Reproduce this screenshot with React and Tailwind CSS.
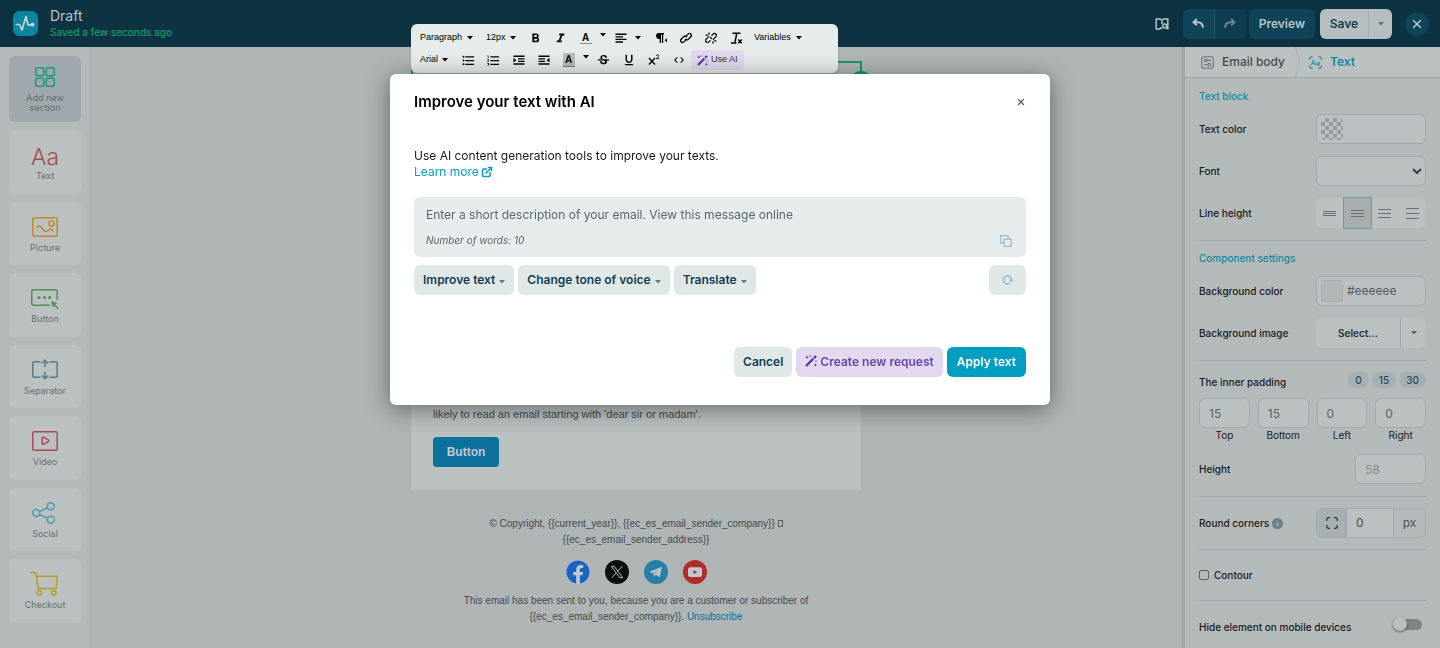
import React, { useState } from 'react';
import { ExternalLink, X, Info } from 'lucide-react';
import {
    MdFormatBold,
    MdFormatItalic,
    MdFormatListBulleted,
    MdFormatListNumbered,
    MdStrikethroughS,
    MdFormatUnderlined,
    MdCode,
} from 'react-icons/md';
import { FaFacebook } from 'react-icons/fa';

const Caret = ({ className = '' }) => (
    <svg viewBox="0 0 6 4" className={`w-1.5 h-1 flex-shrink-0 ${className}`} fill="currentColor" aria-hidden="true">
        <path d="M0 0h6L3 3.6z" />
    </svg>
);

const WandIcon = ({ className = 'w-3 h-3' }) => (
    <svg viewBox="0 0 12 12" className={className} fill="currentColor" aria-hidden="true">
        <path d="M0.2 10.2 7.4 3 9 4.6 1.8 11.8z" />
        <path d="M8.1 2.3 10.2 0.2 11.8 1.8 9.7 3.9z" />
        <path d="M2 0.4 2.5 1.7 3.8 2.2 2.5 2.7 2 4 1.5 2.7 0.2 2.2 1.5 1.7z" />
        <path d="M10.3 8.2 10.8 9.5 12 10 10.8 10.5 10.3 11.8 9.8 10.5 8.6 10 9.8 9.500z" />
        <circle cx="5.3" cy="1" r="0.7" />
        <circle cx="11" cy="6.300" r="0.7" />
    </svg>
);

const AddIcon = () => (
    <svg viewBox="0 0 30 30" className="w-[30px] h-[30px]" fill="none" stroke="currentColor" strokeWidth="1.5" aria-hidden="true">
        <rect x="5.75" y="5.75" width="8" height="8" rx="1.5" />
        <rect x="16.25" y="5.75" width="8" height="8" rx="1.5" />
        <rect x="5.75" y="16.25" width="8" height="8" rx="1.5" />
        <rect x="16.25" y="16.25" width="8" height="8" rx="1.5" />
    </svg>
);

const PictureIcon = () => (
    <svg viewBox="0 0 30 30" className="w-[30px] h-[30px]" fill="none" stroke="currentColor" strokeWidth="1.5" aria-hidden="true">
        <rect x="2.75" y="5.75" width="24.5" height="18.5" rx="1.5" />
        <circle cx="21.5" cy="11.5" r="2.6" />
        <path d="M6.500 16c1.200-1.800 3.200-3.200 4.700-.9s2.600 4.400 5 4.400 2.400-2.500 4.200-2.500 2.200 1 3 2.500" />
    </svg>
);

const ButtonIcon = () => (
    <svg viewBox="0 0 30 30" className="w-[30px] h-[30px]" fill="none" stroke="currentColor" strokeWidth="1.500" aria-hidden="true">
        <path d="M20 22.250H3.250a1.500 1.500 0 0 1-1.500-1.500V8.250a1.500 1.500 0 0 1 1.500-1.500h22.500a1.500 1.500 0 0 1 1.500 1.500v8.500" />
        <g fill="currentColor" stroke="none">
            <circle cx="9" cy="14.500" r="1.600" />
            <circle cx="14.500" cy="14.500" r="1.600" />
            <circle cx="19.700" cy="14.500" r="1.600" />
            <path d="M21 18l6.500 2.200-2.300 1.400 3.300 3.300-1 1-3.300-3.300-1.300 2.200z" />
        </g>
    </svg>
);

const SeparatorIcon = () => (
    <svg viewBox="0 0 30 30" className="w-[30px] h-[30px]" fill="none" stroke="currentColor" strokeWidth="1.500" aria-hidden="true">
        <path d="M10.500 6.750H4.250a1.500 1.500 0 0 0-1.500 1.500v12.500a1.500 1.500 0 0 0 1.500 1.500h6.250M19.500 6.750h6.250a1.500 1.500 0 0 1 1.500 1.500v12.500a1.500 1.500 0 0 1-1.500 1.500H19.500" />
        <path d="M15 12V5.500M11.800 8.500 15 5.300l3.200 3.200M15 17v6.500M11.800 20.500l3.200 3.200 3.200-3.200" />
    </svg>
);

const VideoIcon = () => (
    <svg viewBox="0 0 30 30" className="w-[30px] h-[30px]" fill="none" stroke="currentColor" strokeWidth="1.500" strokeLinejoin="round" aria-hidden="true">
        <rect x="2.750" y="5.750" width="24.500" height="18.500" rx="1.500" />
        <path d="M12.250 12.200c0-1 .8-1.200 1.600-.8l4.400 2.500c.8.500.8 1.300 0 1.800l-4.400 2.500c-.8.400-1.600.1-1.600-.8z" />
    </svg>
);

const SocialIcon = () => (
    <svg viewBox="0 0 30 30" className="w-[30px] h-[30px]" fill="none" stroke="currentColor" strokeWidth="1.500" aria-hidden="true">
        <circle cx="6.300" cy="15" r="3.500" />
        <circle cx="20.800" cy="8.300" r="3.500" />
        <circle cx="20.800" cy="21.700" r="3.500" />
        <path d="M9.500 13.500l8.100-3.700M9.500 16.500l8.100 3.700" />
    </svg>
);

const CartIcon = () => (
    <svg viewBox="0 0 30 30" className="w-[30px] h-[30px]" fill="none" stroke="currentColor" strokeWidth="1.500" strokeLinejoin="round" aria-hidden="true">
        <path d="M0.500 3.500h4.800l1.200 3.700h20.700l-1 12.300H8L6.500 7.200" />
        <circle cx="9.500" cy="24" r="2.200" />
        <circle cx="23.800" cy="24" r="2.200" />
    </svg>
);

const UndoIcon = ({ className = '' }) => (
    <svg viewBox="0 0 12 12" className={`w-3 h-3 ${className}`} fill="none" stroke="currentColor" strokeWidth="1.900" aria-hidden="true">
        <path d="M4.800 1 1.500 4.200l3.300 3.200M1.500 4.200h4.300c3.200 0 4.900 2 5.100 5.600" />
    </svg>
);

const blocks = [
    { name: 'Text', color: 'text-[#a34f4d]', icon: null },
    { name: 'Picture', color: 'text-[#c08a2a]', icon: PictureIcon },
    { name: 'Button', color: 'text-[#4c9150]', icon: ButtonIcon },
    { name: 'Separator', color: 'text-[#537a8e]', icon: SeparatorIcon },
    { name: 'Video', color: 'text-[#a94a5c]', icon: VideoIcon },
    { name: 'Social', color: 'text-[#4d9bb3]', icon: SocialIcon },
    { name: 'Checkout', color: 'text-[#b99b22]', icon: CartIcon },
];

function Header() {
    return (
        <header className="h-[47px] flex-shrink-0 flex items-center bg-[#0d3342] pl-[13px] pr-[11px]">
            <svg viewBox="0 0 25 25" className="w-[25px] h-[25px]" aria-hidden="true">
                <rect width="25" height="25" rx="7" fill="#0e859f" />
                <path d="M3.500 13.500h3l2.500 5.500L13 5.500l2 8.300h4.500" fill="none" stroke="#c6d3d6" strokeWidth="1.700" strokeLinejoin="round" strokeLinecap="round" />
                <circle cx="19.500" cy="13.700" r="1.900" fill="#c6d3d6" />
            </svg>
            <div className="ml-3">
                <h1 className="text-sm leading-4 text-[#b9c3c6]">Draft</h1>
                <p className="text-[10px] leading-4 font-medium text-[#0f9a6c]">Saved a few seconds ago</p>
            </div>
            <div className="ml-auto flex items-center text-[12px] font-semibold">
                <button aria-label="Guide" className="w-7 h-[30px] mr-[7px] flex items-center justify-center text-[#b9c3c6]">
                    <svg viewBox="0 0 14 14" className="w-3.5 h-3.5" fill="none" stroke="currentColor" strokeWidth="1.500" aria-hidden="true">
                        <path d="M6.300 11 4.500 12H1.200V2H5l2 1 2-1h3.800v4.500M7 3v4M5 11.800 7.200 11" />
                        <circle cx="9.700" cy="9" r="1.900" />
                        <path d="M12.800 6v6.500M11 10.300l1.900 1.900" />
                    </svg>
                </button>
                <div className="flex">
                    <button aria-label="Undo" className="w-[31px] h-[30px] rounded-l-md bg-[#0f4459] flex items-center justify-center text-[#b9c3c6]">
                        <UndoIcon />
                    </button>
                    <button aria-label="Redo" className="w-8 h-[30px] rounded-r-md border-l border-[#32596a] bg-[#0e3d4f] flex items-center justify-center text-[#6e8690]">
                        <UndoIcon className="-scale-x-100" />
                    </button>
                </div>
                <button className="ml-[3px] h-[30px] px-2.5 rounded-md bg-[#0f4459] text-[#b9c3c6]">Preview</button>
                <div className="ml-[5px] flex text-[#14404f]">
                    <button className="h-[30px] w-12 rounded-l-md bg-[#b7bec1]">Save</button>
                    <button aria-label="More save options" className="h-[30px] w-6 rounded-r-md border-l border-[#a7aeb1] bg-[#b7bec1] flex items-center justify-center text-[#5f7177]">
                        <Caret />
                    </button>
                </div>
                <button aria-label="Close" className="ml-[13px] w-6 h-6 rounded-full bg-[#0f4459] flex items-center justify-center text-[#b9c3c6]">
                    <X className="w-3.5 h-3.5" strokeWidth={2.5} />
                </button>
            </div>
        </header>
    );
}

function BlockPalette() {
    return (
        <aside className="w-[91px] flex-shrink-0 px-[9px] pt-[9px] bg-[#b4b9ba] border-r border-[#a6abac] text-[9px] leading-[10px] text-[#676d6e]">
            <div className="h-[567px] flex flex-col gap-2">
                <button className="h-[66px] flex-shrink-0 w-[72px] rounded-md bg-[#9fa8ad] flex flex-col items-center pt-[6px]">
                    <span className="text-[#14997f]"><AddIcon /></span>
                    <span className="mt-px">Add new<br />section</span>
                </button>
                {blocks.map(({ name, color, icon: IconComponent }) => (
                    <button key={name} className="flex-1 w-[72px] rounded-md bg-[#bbc0c1] flex flex-col items-center pt-[10px]">
                        <span className={`h-[30px] flex items-center ${color}`}>
                            {IconComponent ? <IconComponent /> : <span className="pt-1 text-[23px] font-light" aria-hidden="true">Aa</span>}
                        </span>
                        <span className="mt-px">{name}</span>
                    </button>
                ))}
            </div>
        </aside>
    );
}

const Tool = ({ label, className = '', children }) => (
    <button aria-label={label} className={`w-[25px] h-5 flex-shrink-0 flex items-center justify-center ${className}`}>
        {children}
    </button>
);

const ToolCaret = ({ label }) => (
    <button aria-label={label} className="w-2.5 h-5 flex-shrink-0 flex justify-center pt-[5px]">
        <Caret />
    </button>
);

function EditorToolbar() {
    return (
        <div className="absolute left-0 -top-[23px] z-20 w-[427px] h-[49px] pl-[9px] pt-1 rounded-md bg-[#e6ecec] text-[9px] text-black shadow-sm">
            <div className="flex items-center h-5">
                <button className="w-[66px] flex items-center gap-[5px]">Paragraph <Caret /></button>
                <button className="w-[37px] flex items-center gap-1">12px <Caret /></button>
                <Tool label="Bold"><MdFormatBold className="w-[15px] h-[15px]" /></Tool>
                <Tool label="Italic"><MdFormatItalic className="w-[15px] h-[15px]" /></Tool>
                <Tool label="Text color">
                    <span className="w-3 h-3 border-b border-[#888] text-[10px] leading-[11px] font-bold">A</span>
                </Tool>
                <ToolCaret label="Text color options" />
                <Tool label="Align">
                    <svg viewBox="0 0 12 12" className="w-3 h-3" fill="currentColor" aria-hidden="true">
                        <path d="M.5 1.500h11V3H.5zM.5 4.200h7.500v1.400H.5zM.5 6.700h11v1.400H.5zM.5 9.300h7.500v1.500H.5z" />
                    </svg>
                </Tool>
                <button aria-label="Align options" className="w-[15px] h-5 pl-0.5 flex items-center"><Caret /></button>
                <Tool label="Text direction">
                    <svg viewBox="0 0 12 12" className="w-3 h-3" fill="currentColor" aria-hidden="true">
                        <path d="M3.500 1H9v1.400H8.200V11H6.900V2.400H6V11H4.700V7A3 3 0 0 1 3.500 1z" />
                        <path d="M12 6.200v4.200L9.600 8.300z" />
                    </svg>
                </Tool>
                <Tool label="Insert link">
                    <svg viewBox="0 0 12 12" className="w-3 h-3" fill="none" stroke="currentColor" strokeWidth="1.300" strokeLinecap="round" aria-hidden="true">
                        <path d="M5.200 8.600 4 9.900a1.900 1.900 0 0 1-2.800-2.700l2.500-2.600a1.900 1.900 0 0 1 2.900.2M6.800 3.400 8 2.100a1.900 1.900 0 0 1 2.800 2.700L8.300 7.400a1.900 1.900 0 0 1-2.900-.2" />
                    </svg>
                </Tool>
                <Tool label="Remove link">
                    <svg viewBox="0 0 12 12" className="w-3 h-3" fill="none" stroke="currentColor" strokeWidth="1.200" strokeLinecap="round" aria-hidden="true">
                        <path d="M5.200 8.600 4 9.900a1.900 1.900 0 0 1-2.800-2.700l2.500-2.600M6.800 3.400 8 2.100a1.900 1.900 0 0 1 2.800 2.700L8.300 7.400M5.300 5.300l1.400 1.400M4 .8v1.500M1 3.200h1.400M8 11.200V9.700M11 8.800H9.600" />
                    </svg>
                </Tool>
                <Tool label="Clear formatting">
                    <svg viewBox="0 0 14 14" className="w-3.5 h-3.5" fill="none" stroke="currentColor" strokeWidth="1.500" aria-hidden="true">
                        <path d="M3.500 2.200h8M7.800 2.200 6 11M2 12h5.500M9.300 8.600l3.400 3.700M12.700 8.600l-3.400 3.700" />
                    </svg>
                </Tool>
                <button className="pl-1.5 flex items-center gap-[5px]">Variables <Caret /></button>
            </div>
            <div className="flex items-center h-6">
                <button className="w-9 flex items-center gap-1">Arial <Caret /></button>
                <Tool label="Bulleted list"><MdFormatListBulleted className="w-[15px] h-[15px]" /></Tool>
                <Tool label="Numbered list"><MdFormatListNumbered className="w-[15px] h-[15px]" /></Tool>
                <Tool label="Increase indent">
                    <svg viewBox="0 0 12 12" className="w-3 h-3" fill="currentColor" aria-hidden="true">
                        <path d="M.5 1.500h11V3H.5zM5 4.200h6.500v1.400H5zM5 6.700h6.500v1.400H5zM.5 9.300h11v1.500H.5zM.5 3.800 3.400 6.200.5 8.500z" />
                    </svg>
                </Tool>
                <Tool label="Decrease indent">
                    <svg viewBox="0 0 12 12" className="w-3 h-3" fill="currentColor" aria-hidden="true">
                        <path d="M.5 1.500h11V3H.5zM.5 4.200h6.500v1.400H.5zM.5 6.700h6.500v1.400H.5zM.5 9.300h11v1.500H.5zM11.500 3.800 8.600 6.200l2.900 2.300z" />
                    </svg>
                </Tool>
                <Tool label="Highlight color">
                    <span className="w-3 h-3.5 border-b border-[#777] bg-[#b9bcbc] text-[10px] leading-[13px] font-bold">A</span>
                </Tool>
                <ToolCaret label="Highlight color options" />
                <Tool label="Strikethrough"><MdStrikethroughS className="w-[15px] h-[15px]" /></Tool>
                <Tool label="Underline"><MdFormatUnderlined className="w-3.5 h-3.5" /></Tool>
                <Tool label="Superscript">
                    <svg viewBox="0 0 12 12" className="w-3 h-3" fill="none" stroke="currentColor" strokeWidth="1.300" aria-hidden="true">
                        <path d="M1 4l6 6.500M7 4l-6 6.500" />
                        <path d="M8.300 1.800c.3-1.500 2.600-1.300 2.400.1C10.600 2.800 8.800 3.600 8.500 4.700h2.700" strokeWidth="0.900" />
                    </svg>
                </Tool>
                <Tool label="Code view"><MdCode className="w-3 h-3" /></Tool>
                <button className="h-5 px-[6px] rounded-sm bg-[#e2d9ee] text-[#2d3138] flex items-center gap-[3px]">
                    <WandIcon className="w-[11px] h-[11px] text-[#58339a]" />
                    Use AI
                </button>
            </div>
        </div>
    );
}

function EmailPreview() {
    return (
        <main className="flex-1 flex justify-center pr-px bg-[#afb4b5] font-['Liberation_Sans',Arial,sans-serif] text-[#45494b]">
            <div className="relative w-[450px]">
                <EditorToolbar />
                <div className="mt-3.5 -mr-px h-16 border-2 border-[#0d9a6c]" />
                <span className="absolute -right-3 top-6 w-6 h-6 rounded-full bg-[#0d9a6c]" aria-hidden="true" />
                <div className="bg-[#bbc0c1] px-[22px] pt-[281px] pb-[23px]">
                    <p className="leading-4 text-[11px]">likely to read an email starting with &apos;dear sir or madam&apos;.</p>
                    <a href="#button" className="mt-[15px] w-[66px] h-[30px] rounded-sm bg-[#0b709b] text-[#c2c9cc] text-[12px] font-bold flex items-center justify-center">
                        Button
                    </a>
                </div>
                <footer className="pt-[26px] text-center text-[10px] leading-4">
                    <p>© Copyright, {'{{current_year}}'}, {'{{ec_es_email_sender_company}}'} <span className="inline-block w-[5px] h-[7px] border border-[#5b5f61]" /></p>
                    <p>{'{{ec_es_email_sender_address}}'}</p>
                    <div className="mt-3 flex justify-center gap-[15px]">
                        <a href="#facebook" aria-label="Facebook" className="w-6 h-6 rounded-full bg-[#c3c8ca]">
                            <FaFacebook className="w-6 h-6 text-[#1c62c4]" />
                        </a>
                        <a href="#x" aria-label="X">
                            <svg viewBox="0 0 24 24" className="w-6 h-6" aria-hidden="true">
                                <circle cx="12" cy="12" r="12" fill="#0b0e0f" />
                                <path d="M6.300 6.300h2.900L17.700 17.700h-2.900zM17 6.300l-4.400 5.100M11.200 12.900 6.800 17.700" fill="none" stroke="#b6bbbc" strokeWidth="1" />
                            </svg>
                        </a>
                        <a href="#telegram" aria-label="Telegram">
                            <svg viewBox="0 0 24 24" className="w-6 h-6" aria-hidden="true">
                                <circle cx="12" cy="12" r="12" fill="#2580a8" />
                                <path d="M5 12 17.800 6.800 15.800 17.500 11.900 14.700 10 16.600 9.300 13.200z" fill="#bcc4c7" />
                                <path d="M9.300 13.200 15.500 8.900 10.800 13.900 10 16.600z" fill="#8ba9b7" />
                            </svg>
                        </a>
                        <a href="#youtube" aria-label="YouTube">
                            <svg viewBox="0 0 24 24" className="w-6 h-6" aria-hidden="true">
                                <circle cx="12" cy="12" r="12" fill="#b12d2c" />
                                <rect x="5" y="7.200" width="14" height="9.800" rx="2.500" fill="#c3c8ca" />
                                <path d="M10.500 9.900v4.400l3.800-2.200z" fill="#b12d2c" />
                            </svg>
                        </a>
                    </div>
                    <p className="mt-[9px]">This email has been sent to you, because you are a customer or subscriber of</p>
                    <p>{'{{ec_es_email_sender_company}}'}. <a href="#unsubscribe" className="text-[#0b709b]">Unsubscribe</a></p>
                </footer>
            </div>
        </main>
    );
}

const lineHeights = [
    { label: 'Compact', gap: 'gap-px' },
    { label: 'Normal', gap: 'gap-0.5' },
    { label: 'Relaxed', gap: 'gap-[3px]' },
    { label: 'Loose', gap: 'gap-1' },
];

const paddings = [
    { name: 'Top', value: '15' },
    { name: 'Bottom', value: '15' },
    { name: 'Left', value: '0' },
    { name: 'Right', value: '0' },
];

const fieldClass = 'h-[30px] rounded-md border border-[#a3a9aa] bg-[#bbc0c1]';

function SettingsPanel() {
    const [spacing, setSpacing] = useState('Normal');

    return (
        <aside className="w-[258px] flex-shrink-0 border-l-[3px] border-[#a1a6a7] bg-[#b4b9ba] text-[10px] text-[#1b2022]">
            {/* Breadcrumbs */}
            <nav className="h-[31px] flex items-stretch bg-[#bbc0c1] border-b border-[#a1a6a7] text-[12px] font-medium">
                <a href="#email-body" className="w-[110px] pl-4 flex items-center gap-2 text-[#454b4d]">
                    <svg viewBox="0 0 14 14" className="w-[13px] h-[13px]" fill="none" stroke="#6a7173" strokeWidth="1.100" aria-hidden="true">
                        <rect x="0.700" y="0.700" width="12.600" height="12.600" rx="2.500" />
                        <circle cx="5" cy="4.700" r="1.500" />
                        <circle cx="9" cy="9.300" r="1.500" />
                        <path d="M6.500 4.700H11M7.500 9.300H3" />
                    </svg>
                    Email body
                </a>
                <svg viewBox="0 0 5 30" className="w-[5px] h-[30px]" fill="none" stroke="#a6adae" aria-hidden="true">
                    <path d="M0.500 0 4.500 15 0.500 30" />
                </svg>
                <a href="#text" className="pl-[9px] flex items-center gap-2 font-semibold text-[#14899a]">
                    <svg viewBox="0 0 14 14" className="w-[13px] h-[13px]" fill="none" stroke="currentColor" strokeWidth="1.100" aria-hidden="true">
                        <path d="M.7 4V3A2.300 2.300 0 0 1 3 .7h1M10 .7h1A2.300 2.300 0 0 1 13.300 3v1M13.300 10v1a2.300 2.300 0 0 1-2.300 2.300h-1M4 13.300H3A2.300 2.300 0 0 1 .7 11v-1" />
                        <path d="M2.500 10 4.700 4.200 6.900 10M3.200 8.300h3" strokeWidth="0.900" />
                        <circle cx="9.600" cy="8.500" r="1.500" strokeWidth="0.900" />
                        <path d="M11.200 6.700v3.500" strokeWidth="0.900" />
                    </svg>
                    Text
                </a>
            </nav>

            <div className="px-[14px] font-medium">
                <section className="pt-2.5 pb-3 border-b border-[#a3a9aa] flex flex-col gap-3">
                    <h2 className="leading-4 text-[#14899a]">Text block</h2>
                    <div className="-mt-0.5 flex items-center justify-between">
                        <label htmlFor="text-color">Text color</label>
                        <div className={`w-[110px] pl-1 flex items-center gap-1 ${fieldClass}`}>
                            <svg viewBox="0 0 22 22" className="w-[22px] h-[22px] flex-shrink-0 rounded-sm" aria-hidden="true">
                                <defs>
                                    <pattern id="checker" width="8" height="8" patternUnits="userSpaceOnUse">
                                        <path d="M0 4h4V0h4v4H4v4H0z" fill="#979c9d" />
                                    </pattern>
                                </defs>
                                <rect width="22" height="22" rx="4" fill="url(#checker)" />
                            </svg>
                            <input id="text-color" type="text" className="w-full min-w-0 bg-transparent" />
                        </div>
                    </div>
                    <div className="flex items-center justify-between">
                        <label htmlFor="font">Font</label>
                        <select id="font" className={`w-[110px] text-[#3b4143] ${fieldClass}`}>
                            <option></option>
                        </select>
                    </div>
                    <div className="flex items-center justify-between">
                        <span>Line height</span>
                        <div className="w-[110px] h-[30px] flex rounded-md bg-[#bbc0c1]">
                            {lineHeights.map(({ label, gap }) => (
                                <button
                                    key={label}
                                    aria-label={label}
                                    onClick={() => setSpacing(label)}
                                    className={`flex-1 flex flex-col items-center justify-center ${gap} ${
                                        spacing === label ? '-m-px border border-[#5ba3ab] bg-[#a8adae]' : ''
                                    }`}
                                >
                                    <span className="w-[13px] h-px bg-[#6a7071]" />
                                    <span className="w-[13px] h-px bg-[#6a7071]" />
                                    <span className="w-[13px] h-px bg-[#6a7071]" />
                                </button>
                            ))}
                        </div>
                    </div>
                </section>

                <section className="pt-[9px] pb-3 border-b border-[#a3a9aa] flex flex-col gap-3">
                    <h2 className="leading-4 text-[#14899a]">Component settings</h2>
                    <div className="-mt-0.5 flex items-center justify-between">
                        <label htmlFor="background-color">Background color</label>
                        <div className={`w-[110px] pl-1 flex items-center gap-1 ${fieldClass}`}>
                            <span className="w-[22px] h-[22px] flex-shrink-0 rounded-sm border border-[#a6abac] bg-[#b1b6b7]" />
                            <input id="background-color" type="text" defaultValue="#eeeeee" className="w-full min-w-0 bg-transparent text-[12px] font-normal text-[#555b5d]" />
                        </div>
                    </div>
                    <div className="flex items-center justify-between">
                        <span>Background image</span>
                        <div className="w-[110px] flex font-semibold text-[#2b3133]">
                            <button className="flex-1 h-[30px] rounded-l-md bg-[#bbc0c1]">Select...</button>
                            <button aria-label="Background image options" className="w-[26px] h-[30px] rounded-r-md border-l border-[#a3a9aa] bg-[#bbc0c1] flex items-center justify-center text-[#5a6062]">
                                <Caret />
                            </button>
                        </div>
                    </div>
                </section>

                <section className="pt-[11px] pb-3 border-b border-[#a3a9aa]">
                    <div className="flex items-start justify-between">
                        <h3 className="pt-0.5 leading-4">The inner padding</h3>
                        <div className="flex gap-[3px] text-[#234b5c]">
                            <button className="w-[21px] h-4 rounded-full bg-[#a6afb1]">0</button>
                            <button className="w-6 h-4 rounded-full bg-[#a6afb1]">15</button>
                            <button className="w-[27px] h-4 rounded-full bg-[#a6afb1]">30</button>
                        </div>
                    </div>
                    <div className="mt-2 grid grid-cols-4 gap-2 font-normal">
                        {paddings.map(({ name, value }) => (
                            <div key={name} className="flex flex-col items-center">
                                <input
                                    id={`padding-${name}`}
                                    type="text"
                                    defaultValue={value}
                                    className={`w-full pl-[9px] text-[12px] text-[#5c6264] ${fieldClass}`}
                                />
                                <label htmlFor={`padding-${name}`} className="leading-[14px]">{name}</label>
                            </div>
                        ))}
                    </div>
                    <div className="mt-3 flex items-center justify-between">
                        <label htmlFor="height">Height</label>
                        <input id="height" type="text" placeholder="58" className={`w-[71px] pl-[9px] text-[12px] font-normal placeholder:text-[#858b8c] ${fieldClass}`} />
                    </div>
                </section>

                <section className="py-[11px] border-b border-[#a3a9aa] flex items-center justify-between">
                    <label htmlFor="round-corners" className="flex items-center gap-[3px]">
                        Round corners
                        <Info className="w-[11px] h-[11px] rounded-full bg-[#6f8186] text-[#b4b9ba] [&>circle]:stroke-[#6f8186]" strokeWidth={3} />
                    </label>
                    <div className={`w-[110px] flex overflow-hidden font-normal text-[12px] text-[#4b5153] ${fieldClass}`}>
                        <button aria-label="Separate corners" className="w-[30px] flex-shrink-0 border-r border-[#a3a9aa] bg-[#a6afb1] flex items-center justify-center">
                            <svg viewBox="0 0 12 12" className="w-3 h-3" fill="none" stroke="#2f3537" strokeWidth="1.300" aria-hidden="true">
                                <path d="M.7 4V2.700a2 2 0 0 1 2-2H4M8 .7h1.300a2 2 0 0 1 2 2V4M11.300 8v1.300a2 2 0 0 1-2 2H8M4 11.300H2.700a2 2 0 0 1-2-2V8" />
                            </svg>
                        </button>
                        <input id="round-corners" type="text" defaultValue="0" className="w-full min-w-0 pl-[9px]" />
                        <span className="w-8 flex-shrink-0 border-l border-[#a3a9aa] bg-[#b4b9ba] flex items-center justify-center">px</span>
                    </div>
                </section>

                <section className="h-[51px] border-b border-[#a3a9aa] flex items-center">
                    <label className="flex items-center gap-[5px]">
                        <input type="checkbox" className="appearance-none w-2.5 h-2.5 rounded-xs border border-[#5c6264]" />
                        Contour
                    </label>
                </section>

                <section className="h-[46px] flex items-center justify-between">
                    <label htmlFor="hide-mobile" className="pt-1.5">Hide element on mobile devices</label>
                    <span className="relative w-[33px] h-3.5 flex items-center">
                        <input id="hide-mobile" type="checkbox" className="appearance-none ml-1.5 mr-1 w-[23px] h-[11px] rounded-full bg-[#7f8485]" />
                        <span className="absolute left-0 top-0 w-3.5 h-3.5 rounded-full bg-[#b9bebf] shadow-sm shadow-black/40 pointer-events-none" />
                    </span>
                </section>
            </div>
        </aside>
    );
}

const aiActions = ['Improve text', 'Change tone of voice', 'Translate'];

function AiModal({ onClose }) {
    return (
        <div className="fixed inset-0 z-40 flex items-start justify-center pt-[74px]">
            <div role="dialog" aria-labelledby="ai-title" className="w-[660px] max-w-full px-6 pt-4 pb-7 rounded-md bg-white shadow-[0_4px_24px_rgba(0,0,0,0.45)]">
                <div className="flex items-center justify-between">
                    <h2 id="ai-title" className="text-[15px] leading-6 font-semibold text-black">Improve your text with AI</h2>
                    <button aria-label="Close dialog" onClick={onClose} className="w-2.5 h-5 flex items-center justify-center text-[#5c6264]">
                        <X className="w-2.5 h-2.5" strokeWidth={3} />
                    </button>
                </div>

                <p className="mt-[34px] text-[12px] leading-4 text-[#16191b]">
                    Use AI content generation tools to improve your texts.
                    <a href="#learn-more" className="flex items-center gap-0.5 text-[#009fc1]">
                        Learn more
                        <ExternalLink className="w-3 h-3" strokeWidth={3} />
                    </a>
                </p>

                <div className="mt-[17px] h-[60px] px-3 pt-2.5 rounded-md bg-[#e6ecec] text-[#5c6668]">
                    <textarea
                        aria-label="Text to improve"
                        defaultValue="Enter a short description of your email. View this message online"
                        className="block w-full h-4 resize-none overflow-hidden text-[12px] leading-4"
                    />
                    <div className="mt-[9px] flex items-center justify-between">
                        <span className="text-[10px] leading-4 italic">Number of words: 10</span>
                        <button aria-label="Copy text" className="mr-0.5 pt-0.5 text-[#9fb9c9]">
                            <svg viewBox="0 0 12 12" className="w-3 h-3" fill="none" stroke="currentColor" strokeWidth="1.300" aria-hidden="true">
                                <path d="M3.600 8H.7V.7H8v2.900" />
                                <rect x="4" y="4" width="7.300" height="7.300" rx="0.500" />
                            </svg>
                        </button>
                    </div>
                </div>

                <div className="mt-2 flex gap-1 text-[12px] font-semibold text-[#123f52]">
                    {aiActions.map((action) => (
                        <button key={action} className="h-[30px] px-[9px] rounded-md bg-[#e0e8e7] flex items-center gap-1">
                            {action}
                            <Caret className="mt-1 text-[#5d7b88]" />
                        </button>
                    ))}
                    <button aria-label="Regenerate" className="ml-auto w-[37px] h-[30px] rounded-md bg-[#e0e8e7] flex items-center justify-center text-[#9fb9c9]">
                        <svg viewBox="0 0 12 12" className="w-3 h-3" fill="none" stroke="currentColor" strokeWidth="1.600" aria-hidden="true">
                            <path d="M7.500 9.300A4 4 0 1 1 9.400 6" />
                            <path d="M7 5.700h4.800L9.400 8.500z" fill="currentColor" stroke="none" />
                        </svg>
                    </button>
                </div>

                {/* Footer */}
                <div className="mt-[52px] flex justify-end gap-1 text-[12px] font-semibold">
                    <button onClick={onClose} className="h-[30px] px-[9px] rounded-md bg-[#e0e8e7] text-[#123f52]">Cancel</button>
                    <button className="h-[30px] px-[9px] rounded-md bg-[#e2d9ee] text-[#6a43a8] flex items-center gap-[3px]">
                        <WandIcon className="w-3 h-3 mb-0.5 text-[#58339a]" />
                        Create new request
                    </button>
                    <button className="h-[30px] px-2.5 rounded-md bg-[#009fc1] text-white">Apply text</button>
                </div>
            </div>
        </div>
    );
}

export default function App() {
    const [modalOpen, setModalOpen] = useState(true);

    return (
        <div className="min-h-screen flex flex-col bg-[#afb4b5] font-['Inter',sans-serif]">
            <Header />
            <div className="flex-1 flex">
                <BlockPalette />
                <EmailPreview />
                <SettingsPanel />
            </div>
            {modalOpen && <AiModal onClose={() => setModalOpen(false)} />}
        </div>
    );
}
